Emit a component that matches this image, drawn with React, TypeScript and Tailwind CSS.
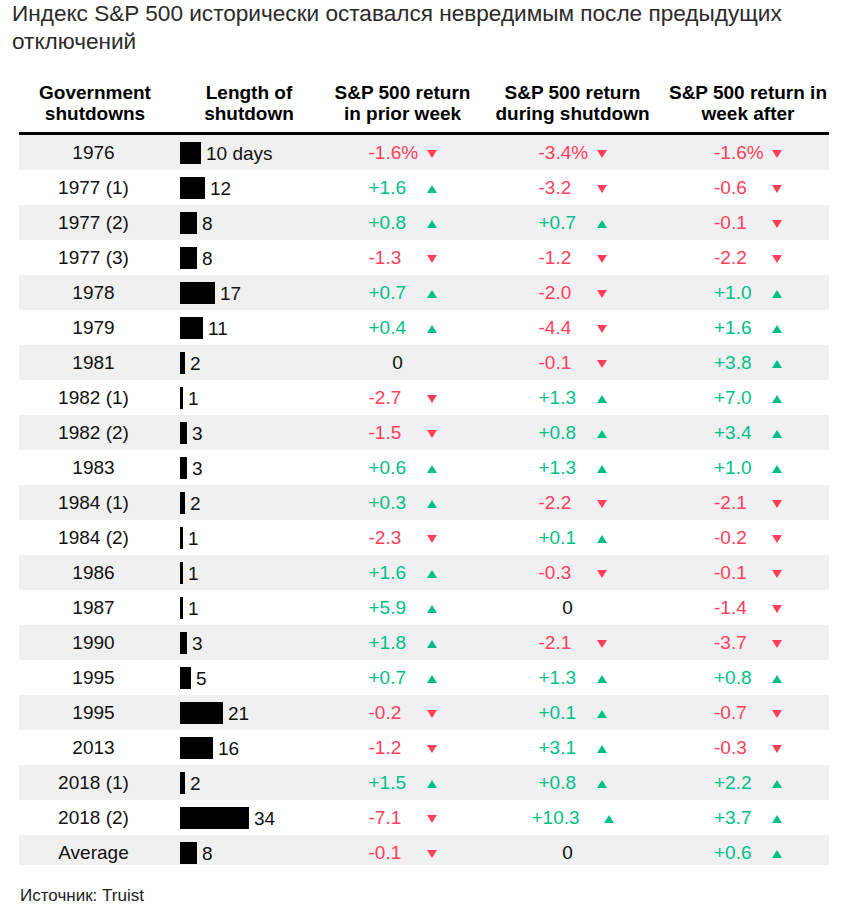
import React from 'react';

type Row = [string, number, string, string, string, string];

const rows: Row[] = [
  ['1976', 10, '10 days', '-1.6%', '-3.4%', '-1.6%'],
  ['1977 (1)', 12, '12', '+1.6', '-3.2', '-0.6'],
  ['1977 (2)', 8, '8', '+0.8', '+0.7', '-0.1'],
  ['1977 (3)', 8, '8', '-1.3', '-1.2', '-2.2'],
  ['1978', 17, '17', '+0.7', '-2.0', '+1.0'],
  ['1979', 11, '11', '+0.4', '-4.4', '+1.6'],
  ['1981', 2, '2', '0', '-0.1', '+3.8'],
  ['1982 (1)', 1, '1', '-2.7', '+1.3', '+7.0'],
  ['1982 (2)', 3, '3', '-1.5', '+0.8', '+3.4'],
  ['1983', 3, '3', '+0.6', '+1.3', '+1.0'],
  ['1984 (1)', 2, '2', '+0.3', '-2.2', '-2.1'],
  ['1984 (2)', 1, '1', '-2.3', '+0.1', '-0.2'],
  ['1986', 1, '1', '+1.6', '-0.3', '-0.1'],
  ['1987', 1, '1', '+5.9', '0', '-1.4'],
  ['1990', 3, '3', '+1.8', '-2.1', '-3.7'],
  ['1995', 5, '5', '+0.7', '+1.3', '+0.8'],
  ['1995', 21, '21', '-0.2', '+0.1', '-0.7'],
  ['2013', 16, '16', '-1.2', '+3.1', '-0.3'],
  ['2018 (1)', 2, '2', '+1.5', '+0.8', '+2.2'],
  ['2018 (2)', 34, '34', '-7.1', '+10.3', '+3.7'],
  ['Average', 8, '8', '-0.1', '0', '+0.6'],
];

const cols = 'grid grid-cols-[152px_156px_151px_189px_162px]';

function Triangle({ up }: { up: boolean }) {
  return (
    <svg width="10" height="8" viewBox="0 0 10 8" className="mt-[2px]">
      {up ? <polygon points="5,0 10,8 0,8" fill="#00bf86" /> : <polygon points="0,0 10,0 5,8" fill="#ff3e5c" />}
    </svg>
  );
}

function Ret({ v }: { v: string }) {
  if (v === '0') {
    return (
      <div className="flex h-[23px] items-center justify-center">
        <span className="w-[58px] text-center text-[#111]">0</span>
        <span className="w-[10px]" />
      </div>
    );
  }
  const up = v.startsWith('+');
  const wide = v.length >= 5 && !v.includes('%');
  return (
    <div className="flex h-[23px] items-center justify-center">
      <span className={`${wide ? 'w-[72px]' : 'w-[58px]'} whitespace-nowrap text-left ${up ? 'text-[#00bf86]' : 'text-[#ff3e5c]'}`}>
        {v}
      </span>
      <Triangle up={up} />
    </div>
  );
}

export default function App() {
  return (
    <div className="min-h-[913px] w-[848px] bg-white font-['Liberation_Sans',Arial,sans-serif] text-[#111]">
      <h1 className="pl-[12px] pr-[8px] text-[22.6px] font-normal leading-[28px] text-[#2a2a2a]">
        Индекс S&amp;P 500 исторически оставался невредимым после предыдущих отключений
      </h1>

      <div className="ml-[19px] mt-[26px] w-[810px]">
        <div className={`${cols} border-b-[3px] border-black pb-[8px] text-center text-[19px] font-bold leading-[21px] text-black`}>
          <div>Government<br />shutdowns</div>
          <div>Length of<br />shutdown</div>
          <div>S&amp;P 500 return<br />in prior week</div>
          <div>S&amp;P 500 return<br />during shutdown</div>
          <div>S&amp;P 500 return in<br />week after</div>
        </div>

        {rows.map((r, i) => (
          <div
            key={i}
            className={`${cols} items-start pt-[6px] text-[19px] leading-[23px] ${i % 2 === 0 ? 'bg-[#f0f0f0]' : 'bg-white'} ${i === rows.length - 1 ? 'h-[30px]' : 'h-[35px]'}`}
          >
            <div className="h-[23px] pr-[3px] text-center">{r[0]}</div>
            <div className="flex h-[23px] items-center pl-[9px]">
              <div className="h-[22px] bg-black" style={{ width: Math.round(r[1] * 2 + 1) }} />
              <span className="ml-[5px] mt-[2px] whitespace-nowrap">{r[2]}</span>
            </div>
            <Ret v={r[3]} />
            <Ret v={r[4]} />
            <Ret v={r[5]} />
          </div>
        ))}
      </div>

      <p className="ml-[20px] mt-[21px] text-[17px] leading-[20px] text-[#222]">Источник: Truist</p>
    </div>
  );
}
